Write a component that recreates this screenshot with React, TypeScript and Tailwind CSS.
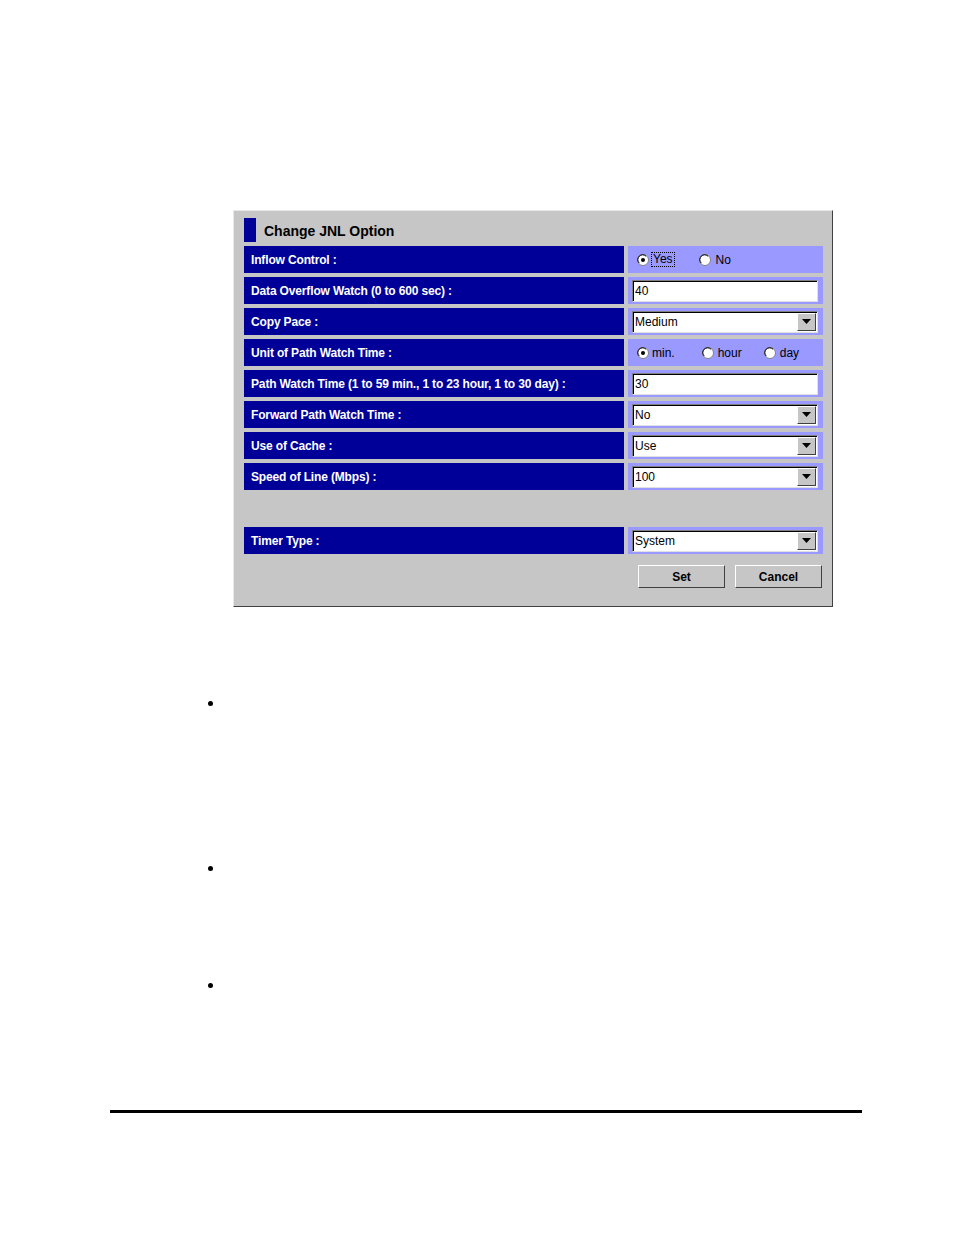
import React from 'react'

const FONT = { fontFamily: '"Liberation Sans", Arial, sans-serif' }

function Radio({ checked }: { checked?: boolean }) {
  return (
    <svg width="12" height="12" viewBox="0 0 12 12" className="shrink-0">
      <circle cx="6" cy="6" r="5.5" fill="#ffffff" stroke="#808080" strokeWidth="1" />
      <path d="M2.2 9 A4.6 4.6 0 0 1 9 2.2" fill="none" stroke="#000000" strokeWidth="1" />
      {checked && <circle cx="6" cy="6" r="2" fill="#000000" />}
    </svg>
  )
}

function Label({ text }: { text: string }) {
  return (
    <div className="w-[380px] h-[27px] bg-[#000099] flex items-center pl-[7px] pt-[1px] text-[12px] font-bold text-white tracking-[-0.15px]">
      {text}
    </div>
  )
}

function Cell({ children }: { children: React.ReactNode }) {
  return <div className="w-[195px] h-[27px] bg-[#9999ff] flex items-center">{children}</div>
}

function TextBox({ value }: { value: string }) {
  return (
    <div className="ml-[4px] w-[186px] h-[22px] bg-white border border-t-[#808080] border-l-[#808080] border-b-[#e0e0e0] border-r-[#e0e0e0] shadow-[inset_1px_1px_0_#000] flex items-center pl-[2px] text-[12px] text-black">
      {value}
    </div>
  )
}

function Select({ value }: { value: string }) {
  return (
    <div className="ml-[4px] w-[186px] h-[22px] bg-white border border-t-[#808080] border-l-[#808080] border-b-[#e0e0e0] border-r-[#e0e0e0] shadow-[inset_1px_1px_0_#000] flex items-center text-[12px] text-black">
      <span className="flex-1 pl-[2px]">{value}</span>
      <div className="w-[19px] h-[18px] mr-[1px] bg-[#c6c6c6] border border-t-white border-l-white border-b-[#404040] border-r-[#404040] flex items-center justify-center">
        <svg width="9" height="5" viewBox="0 0 9 5">
          <path d="M0 0 H9 L4.5 5 Z" fill="#000000" />
        </svg>
      </div>
    </div>
  )
}

function Button({ text }: { text: string }) {
  return (
    <div className="w-[87px] h-[23px] bg-[#c6c6c6] border border-t-white border-l-white border-b-[#404040] border-r-[#404040] flex items-center justify-center text-[12px] font-bold text-black">
      {text}
    </div>
  )
}

function Row({ label, children }: { label: string; children: React.ReactNode }) {
  return (
    <div className="flex gap-[4px]">
      <Label text={label} />
      <Cell>{children}</Cell>
    </div>
  )
}

export default function App() {
  return (
    <div className="w-[954px] h-[1235px] bg-white relative" style={FONT}>
      <div className="pt-[210px] pl-[233px]">
        <div className="w-[600px] h-[397px] bg-[#c6c6c6] border border-t-[#e8e8e8] border-l-[#e8e8e8] border-b-[#404040] border-r-[#404040] pl-[10px] pt-[7px]">
          <div className="flex items-center h-[24px] mb-[4px]">
            <div className="w-[12px] h-[24px] bg-[#000099]" />
            <span className="ml-[8px] pt-[2px] text-[14px] font-bold text-black">Change JNL Option</span>
          </div>
          <div className="flex flex-col gap-[4px]">
            <Row label="Inflow Control :">
              <div className="flex items-center ml-[9px] text-[12px] text-black">
                <Radio checked />
                <span className="ml-[3px] px-[1px] outline outline-1 outline-dotted outline-black leading-[13px]">Yes</span>
                <span className="ml-[25px]"><Radio /></span>
                <span className="ml-[5px]">No</span>
              </div>
            </Row>
            <Row label="Data Overflow Watch (0 to 600 sec) :">
              <TextBox value="40" />
            </Row>
            <Row label="Copy Pace :">
              <Select value="Medium" />
            </Row>
            <Row label="Unit of Path Watch Time :">
              <div className="flex items-center ml-[9px] text-[12px] text-black">
                <Radio checked />
                <span className="ml-[3px]">min.</span>
                <span className="ml-[27px]"><Radio /></span>
                <span className="ml-[4px]">hour</span>
                <span className="ml-[22px]"><Radio /></span>
                <span className="ml-[4px]">day</span>
              </div>
            </Row>
            <Row label="Path Watch Time (1 to 59 min., 1 to 23 hour, 1 to 30 day) :">
              <TextBox value="30" />
            </Row>
            <Row label="Forward Path Watch Time :">
              <Select value="No" />
            </Row>
            <Row label="Use of Cache :">
              <Select value="Use" />
            </Row>
            <Row label="Speed of Line (Mbps) :">
              <Select value="100" />
            </Row>
          </div>
          <div className="mt-[37px]">
            <Row label="Timer Type :">
              <Select value="System" />
            </Row>
          </div>
          <div className="flex mt-[11px] ml-[394px] gap-[10px]">
            <Button text="Set" />
            <Button text="Cancel" />
          </div>
        </div>
      </div>

      <div className="pl-[208px]">
        <div className="mt-[94px] w-[5px] h-[5px] rounded-full bg-black" />
        <div className="mt-[160px] w-[5px] h-[5px] rounded-full bg-black" />
        <div className="mt-[112px] w-[5px] h-[5px] rounded-full bg-black" />
      </div>

      <div className="ml-[110px] mt-[122px] w-[752px] h-[3px] bg-black" />
    </div>
  )
}
